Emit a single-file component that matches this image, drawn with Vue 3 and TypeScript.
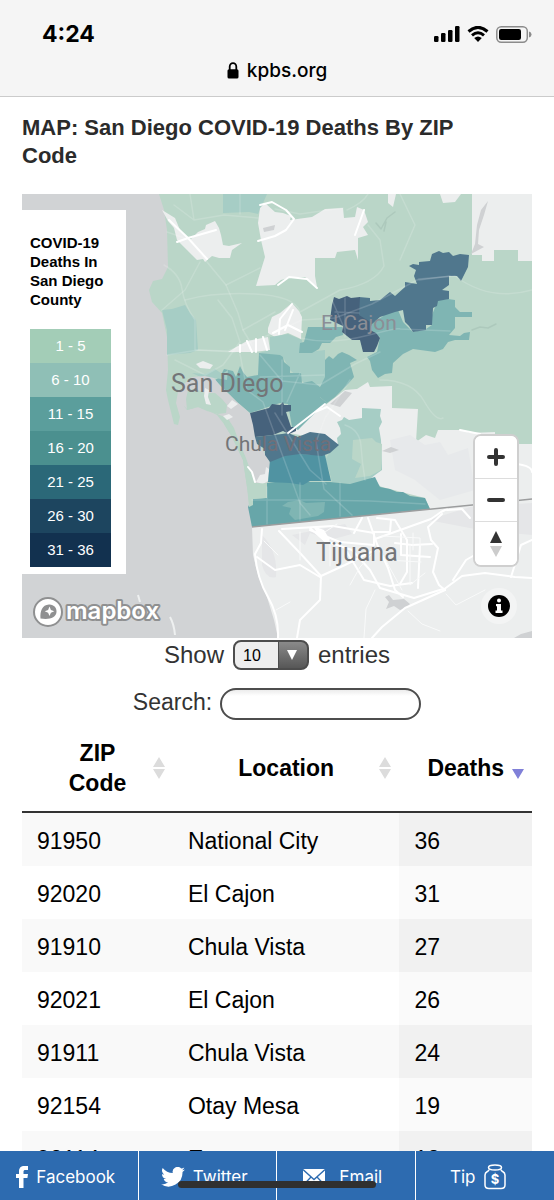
<script setup lang="ts">
import { computed, ref } from 'vue'

interface Row {
  zip: string
  location: string
  deaths: number
}

type Level = 'l1' | 'l2' | 'l3' | 'l4' | 'l5' | 'l6' | 'l7' | 'land' | 'water'

interface Area {
  level: Level
  points: string
}

const bands = ['1 - 5', '6 - 10', '11 - 15', '16 - 20', '21 - 25', '26 - 30', '31 - 36']

const rows: Row[] = [
  { zip: '91950', location: 'National City', deaths: 36 },
  { zip: '92020', location: 'El Cajon', deaths: 31 },
  { zip: '91910', location: 'Chula Vista', deaths: 27 },
  { zip: '92021', location: 'El Cajon', deaths: 26 },
  { zip: '91911', location: 'Chula Vista', deaths: 24 },
  { zip: '92154', location: 'Otay Mesa', deaths: 19 },
  { zip: '92114', location: 'Encanto', deaths: 18 },
]

const pageSize = ref('10')
const query = ref('')

const visibleRows = computed(() => {
  const q = query.value.trim().toLowerCase()
  return rows.filter((r) => `${r.zip} ${r.location} ${r.deaths}`.toLowerCase().includes(q))
})

const areas: Area[] = [
  // county mainland, Point Loma and the Silver Strand
  { level: 'l1', points: '159,194 532,194 532,499 252,527 250,510 247,487 243,460 232,437 224,424 217,415 207,410 198,407 187,410 184,406 182,393 178,392 176,403 180,417 178,425 174,424 171,412 168,400 166,390 168,370 167,337 162,313 152,302 149,290 153,281 162,279 168,267 167,230 164,210' },
  { level: 'l2', points: '223,194 267,194 263,203 258,214 249,212 223,213' },
  { level: 'l2', points: '162,310 172,309 185,305 190,313 196,320 198,350 190,353 167,355 167,330' },
  // areas with no reported deaths
  { level: 'land', points: '162,210 175,218 180,230 190,240 198,232 205,229 206,225 215,221 219,228 221,235 223,245 229,246 242,243 232,250 230,258 219,258 212,256 205,262 203,259 197,260 193,256 187,250 177,240 174,228 168,221' },
  { level: 'land', points: '265,203 260,208 258,223 261,240 265,257 256,286 275,285 281,280 288,278 305,277 317,287 315,276 315,258 335,258 337,252 355,250 358,260 358,238 368,235 363,227 368,222 364,210 357,207 355,217 344,218 343,208 325,209 312,217 290,220 291,216 283,213 275,212' },
  { level: 'land', points: '472,194 532,194 532,261 518,261 518,250 494,250 494,261 482,261 482,255 472,255' },
  { level: 'land', points: '388,194 396,194 393,207 388,203' },
  { level: 'land', points: '440,194 461,194 455,202 443,203' },
  { level: 'land', points: '268,333 268,328 272,317 280,313 292,303 299,311 302,317 301,339 288,333 275,337' },
  { level: 'land', points: '228,352 238,346 247,341 268,337 270,350 253,352' },
  { level: 'land', points: '288,433 300,425 315,413 328,403 345,390 357,389 368,382 370,387 392,386 392,408 418,409 416,442 426,435 435,438 438,430 462,430 470,433 495,432 495,444 532,444 532,499 430,509 425,498 382,487 350,470 330,440' },
  // central city
  { level: 'l2', points: '259,353 270,350 270,337 288,334 302,340 301,353 325,350 325,383 312,390 290,370 283,357' },
  { level: 'l3', points: '259,353 280,355 283,357 284,362 290,367 290,373 301,373 302,383 312,381 320,387 320,397 327,403 315,413 298,430 292,427 288,404 280,403 250,413 237,402 228,393 215,380 220,377 224,369 233,371 236,377 240,366 243,372 247,377 258,375' },
  { level: 'l2', points: '192,373 205,374 215,369 222,374 228,370 227,380 215,378 205,379' },
  // San Diego Bay
  { level: 'water', points: '180,391 185,383 192,377 205,376 214,378 222,388 230,395 237,402 252,415 254,428 255,437 262,449 267,457 270,463 269,473 267,483 255,483 247,462 238,440 227,418 215,413 198,407 187,409 183,405' },
  { level: 'l1', points: '186,399 188,390 196,389 205,393 215,393 222,399 227,405 226,413 218,414 207,411 198,407 187,410' },
  { level: 'l1', points: '227,417 234,428 239,442 246,458 250,470 255,484 247,487 243,460 232,437 224,424' },
  { level: 'land', points: '196,364 203,361 213,365 210,369 200,368' },
  { level: 'land', points: '205,388 209,390 208,397 211,405 206,404 204,396' },
  { level: 'land', points: '227,406 232,400 238,404 231,409' },
  { level: 'land', points: '223,416 229,414 233,417 227,420' },
  { level: 'land', points: '256,482 260,475 265,474 266,467 269,469 268,481 263,484' },
  // La Mesa and Spring Valley
  { level: 'l3', points: '308,327 342,327 343,335 336,337 330,343 322,343 319,349 312,353 299,353 300,343 304,342' },
  { level: 'l3', points: '325,360 329,356 333,359 338,354 342,352 349,355 357,360 350,363 354,377 348,384 342,390 335,397 327,403 320,397 320,387 325,377' },
  // east county
  { level: 'l3', points: '372,322 382,317 389,310 398,310 403,322 413,332 426,329 432,325 432,315 438,300 448,299 455,300 455,307 460,312 472,312 472,317 455,317 455,328 449,335 460,336 464,333 470,332 469,340 455,340 448,342 443,349 435,352 413,349 403,354 393,363 392,373 385,374 378,378 372,370 370,361 367,357 377,352 380,337 372,332' },
  { level: 'l6', points: '359,297 370,298 370,301 380,300 390,292 395,296 405,287 405,282 417,284 414,276 416,270 409,266 413,264 419,265 419,262 430,261 432,254 439,251 443,253 449,252 453,256 460,254 469,255 468,267 461,281 457,276 449,276 449,285 442,290 449,291 449,299 438,301 437,306 433,308 432,325 426,325 426,330 413,332 409,326 405,322 403,310 395,312 380,317 372,324 358,319' },
  { level: 'l7', points: '334,297 339,299 347,296 351,298 360,297 359,315 372,323 370,330 376,333 380,338 377,346 374,352 363,352 360,340 352,340 342,332 343,326 330,320 332,305' },
  // south bay
  { level: 'l2', points: '342,420 344,417 349,420 362,418 362,408 381,409 380,416 382,422 379,428 381,440 382,470 375,475 365,483 350,484 332,482 329,470 325,460 330,452 338,445 337,438 341,434 340,428 337,422' },
  { level: 'l1', points: '353,440 372,438 376,442 382,444 381,470 370,476 355,478 361,464 352,459' },
  { level: 'l4', points: '248,507 252,499 267,498 267,483 275,482 330,482 350,484 375,477 380,487 390,489 397,492 403,492 410,496 425,498 430,509 252,527' },
  { level: 'l3', points: '288,502 300,500 306,503 325,502 324,512 318,516 295,520 289,514 291,508 282,506' },
  { level: 'l1', points: '247,485 267,483 267,498 253,499 253,505 249,507' },
  { level: 'l5', points: '270,460 276,453 325,455 327,464 331,481 310,481 303,485 290,483 268,482' },
  { level: 'l6', points: '265,449 257,444 255,437 282,434 288,433 298,437 310,432 325,434 339,445 330,453 322,456 300,454 285,456 270,462 265,455' },
  { level: 'l7', points: '250,413 269,408 272,404 280,405 283,402 284,405 291,405 291,411 286,412 291,427 296,427 296,431 289,434 283,431 273,435 255,437 253,425' },
]

const streets: string[] = [
  'M167 232 L190 240 L207 262 L226 285 L238 313 L243 330 L252 345',
  'M164 265 Q180 274 182 289 T195 320 V350 L235 352',
  'M185 300 Q215 292 255 294 T300 312 L340 290 Q375 284 384 266 L380 240 L368 225',
  'M174 205 L194 220 L224 215 L258 218 M190 194 L194 220 M240 194 V214',
  'M200 262 L185 290 L162 310 M226 285 L260 268 M243 330 L275 312',
  'M167 355 L198 350 L228 351 L262 338 L302 320 L335 318 L372 304 L419 279 L455 276 Q490 302 532 290',
  'M300 338 Q330 345 365 336 T400 329 L450 331',
  'M175 360 L205 375 L223 365 L240 342 L232 318 L218 300',
  'M240 354 L247 390 L263 402 L275 435 L300 503 L310 515',
  'M260 355 L282 381 L320 385 L355 364 L380 352',
  'M282 360 V415 M260 377 L324 375 M300 373 L287 402',
  'M275 413 L310 470 L326 484 M350 380 L325 418 L316 442 L324 489 L352 515',
  'M252 500 L315 500 L370 501 L425 504 M267 487 V524 M300 483 V520 M340 483 V516',
  'M345 425 Q360 430 361 446 T365 480 M380 380 Q412 380 424 401 T443 418',
  'M347 210 Q363 203 368 194 M400 194 L415 225 L400 260 M343 208 L300 214 L275 209',
  'M332 300 L345 330 M345 298 V337 M335 312 L359 313 M419 280 L450 276',
]

const highways: string[] = [
  'M260 205 L272 202 L286 210 L294 219 L286 230 L275 236 L258 241',
  'M169 220 L188 238 L207 259 M188 238 L177 242 M188 238 L216 230',
  'M278 285 L289 277 L307 279 L317 288',
  'M273 333 L288 325 L302 332 M279 334 L280 319 L292 304 M285 330 L293 310',
  'M240 345 V352 M247 341 L252 352 M256 339 V352 M263 337 L267 350',
  'M248 467 L252 472 L255 482',
  'M288 433 L315 412 L325 404 M315 412 L327 407 L340 416',
  'M355 235 L364 210 M460 430 L480 434 M517 464 Q532 466 532 472',
]

const mexicoRoads: string[] = [
  'M262 529 L261 543 L255 554 Q257 578 268 597 T278 638',
  'M279 531 L300 553 L321 576 L320 600 L300 620 L297 638',
  'M282 529 L333 526 L374 533 L374 545 L340 542 L310 530',
  'M310 528 L325 541 L352 550 L370 570 L380 588 L414 598 L443 589',
  'M368 518 L377 544 L388 568 L395 590 L403 597',
  'M347 552 L364 580 L390 586 L412 583',
  'M377 518 L395 520 L407 540 L407 572 L400 584',
  'M375 539 L431 519 L441 512 L447 509',
  'M395 543 L412 545 L432 544 M401 534 V555 L430 557 M420 545 L418 588',
  'M442 514 L428 527 L431 540 L438 548 L433 572 L439 585 L445 590',
  'M443 590 L462 576 L485 573 L515 577 L532 578 M445 590 L405 608 L382 627 L372 638',
  'M511 577 L521 545 L532 540 M453 580 L466 560 L480 552 M447 510 L462 509 L470 518',
  'M321 576 L345 565 L375 550 M257 557 L275 570 L300 565 L320 577',
  'M391 520 L390 532 L373 532 M354 533 L362 518',
]

const fineRoads: string[] = [
  'M350 585 L360 567 L371 555 M375 590 L366 609 L364 638 M325 532 L337 524 M300 532 V560 M330 545 V566',
  'M382 536 L420 538 L420 553 M387 560 L421 562 M410 545 V585 L425 573 M413 533 L413 550 M380 550 L402 590',
  'M446 594 L456 605 L485 590 M408 611 L422 624 L440 631 M276 610 L290 602 M264 541 L278 555',
]
</script>

<template>
  <div class="page">
    <header class="browser">
      <div class="status">
        <span class="time">4:24</span>
        <span class="indicators">
          <svg class="signal" viewBox="0 0 26 16" aria-hidden="true">
            <rect x="0" y="10" width="4.5" height="6" rx="1.2" />
            <rect x="7" y="7" width="4.5" height="9" rx="1.2" />
            <rect x="14" y="4" width="4.5" height="12" rx="1.2" />
            <rect x="21" y="0" width="4.5" height="16" rx="1.2" />
          </svg>
          <svg class="wifi" viewBox="0 0 22 16" aria-hidden="true">
            <path d="M1.5 5.5 Q11 -2.8 20.5 5.5" />
            <path d="M5 9.3 Q11 4.2 17 9.3" />
            <path class="solid" d="M7.2 12 Q11 9 14.8 12 L11 16 Z" />
          </svg>
          <svg class="battery" viewBox="0 0 36 17" aria-hidden="true">
            <rect class="case" x="0.8" y="0.8" width="30.5" height="15.4" rx="4.4" />
            <rect x="3" y="3" width="22" height="11" rx="2.2" />
            <path class="cap" d="M33 5.5 Q35.5 6.2 35.5 8.5 T33 11.5 Z" />
          </svg>
        </span>
      </div>
      <div class="address">
        <svg class="lock" viewBox="0 0 12 17" aria-hidden="true">
          <path d="M2.7 8 V4.7 a3.3 3.5 0 0 1 6.6 0 V8" />
          <rect x="0.5" y="7.2" width="11" height="9.3" rx="1.6" />
        </svg>
        <span>kpbs.org</span>
      </div>
    </header>

    <main class="content">
      <h1>MAP: San Diego COVID-19 Deaths By ZIP Code</h1>

      <section class="map" aria-label="COVID-19 deaths by ZIP code">
        <svg class="tiles" viewBox="22 194 510 444" preserveAspectRatio="xMidYMid slice" aria-hidden="true">
          <rect class="water" x="22" y="194" width="510" height="444" />
          <polygon class="mexico" points="252,527 532,499 532,638 278,638 274,620 267,597 258,575 253,555" />
          <path class="relief" d="M262 535 Q278 551 276 577 Q266 580 262 565 Z M292 535 L345 524 L352 534 L330 540 L310 533 L305 545 Z M428 520 L470 507 L532 503 V535 L480 530 Z" />
          <polygon v-for="(a, i) in areas" :key="i" :class="a.level" :points="a.points" />
          <g class="haze">
            <path d="M390 440 L410 435 L425 445 L440 442 L448 455 L468 448 L475 490 L440 500 L415 480 L395 470 Z" />
            <path d="M480 465 L500 460 L515 480 L500 497 L482 490 Z" />
          </g>
          <g class="shade">
            <path d="M488 201 L484 215 L479 230 L478 244 L484 247 L471 254 L475 244 L477 225 L481 210 Z" />
            <path d="M263 228 L275 225 L274 230 L264 232 Z" />
            <path d="M330 404 L345 391 L352 393 L340 407 Z" />
            <path d="M382 451 L391 447 L399 450 L390 453 Z" />
            <path d="M385 597 L389 595 L393 600 L404 599 L410 604 L407 608 L400 610 L394 606 L386 609 L389 602 Z" />
            <path d="M514 638 L521 634 L532 631 V638 Z" />
          </g>
          <g class="creeks">
            <path d="M376 223 L381 229 L387 218 L395 212 M384 231 L386 222 M472 330 L480 327 L488 328 L496 324" />
          </g>
          <g class="streets"><path v-for="d in streets" :key="d" :d="d" /></g>
          <g class="highways"><path v-for="d in highways" :key="d" :d="d" /></g>
          <g class="highways"><path v-for="d in mexicoRoads" :key="d" :d="d" /></g>
          <g class="fine"><path v-for="d in fineRoads" :key="d" :d="d" /></g>
          <path class="interchange" d="M313 526 L324 530 L330 540 L326 543 L318 535 Z" />
          <path class="foam" d="M138 595 L140 602 M170 617 Q174 624 175 635" />
          <path class="border" d="M252 527 L532 499" />
          <g class="places">
            <text x="171" y="392" font-size="25">San Diego</text>
            <text class="faint" x="321" y="330" font-size="21">El Cajon</text>
            <text x="225" y="451" font-size="21">Chu<tspan class="dusk">la Vista</tspan></text>
            <text x="316" y="561" font-size="25">Tijuana</text>
          </g>
        </svg>

        <aside class="legend">
          <h2>COVID-19 Deaths In San Diego County</h2>
          <ul>
            <li v-for="(band, i) in bands" :key="band" :class="`band${i + 1}`">{{ band }}</li>
          </ul>
        </aside>

        <a class="logo" href="#" aria-label="mapbox">
          <svg viewBox="0 0 130 34" aria-hidden="true">
            <circle class="ring" cx="16" cy="17" r="14" />
            <path class="pin" d="M8.5 23.5 C8 16 10 9.8 17 9.4 C22 9.2 25 13 24.5 17 C24 23 17 25 8.5 23.5 Z" />
            <path class="star" d="M17.5 11.5 L18.9 14.9 L22.3 16.3 L18.9 17.7 L17.5 21.1 L16.1 17.7 L12.7 16.3 L16.1 14.9 Z" />
            <text x="34" y="24">mapbox</text>
          </svg>
        </a>

        <div class="zoom">
          <button type="button" aria-label="Zoom in">
            <svg viewBox="0 0 20 20"><path class="bar" d="M10 3 V17 M3 10 H17" /></svg>
          </button>
          <button type="button" aria-label="Zoom out">
            <svg viewBox="0 0 20 20"><path class="bar" d="M3 10 H17" /></svg>
          </button>
          <button type="button" aria-label="Reset bearing to north">
            <svg class="needle" viewBox="0 0 12 28">
              <path class="north" d="M6 1 L12 13 H0 Z" />
              <path class="south" d="M6 27 L12 16 H0 Z" />
            </svg>
          </button>
        </div>

        <button class="info" type="button" aria-label="Map attribution">
          <svg viewBox="0 0 22 22" aria-hidden="true">
            <circle cx="11" cy="11" r="11" />
            <circle class="mark" cx="11" cy="5.5" r="2" />
            <path class="mark" d="M8 9 H13 V15.5 H14.5 V18 H7.5 V15.5 H9 V11.2 H8 Z" />
          </svg>
        </button>
      </section>

      <div class="length">
        <label for="page-size">Show</label>
        <span class="picker">
          <select id="page-size" v-model="pageSize">
            <option>10</option>
            <option>25</option>
            <option>50</option>
            <option>100</option>
          </select>
          <svg class="arrow" viewBox="0 0 10 10" aria-hidden="true"><path d="M0 0 H10 L5 10 Z" /></svg>
        </span>
        <span>entries</span>
      </div>

      <div class="search">
        <label for="search">Search:</label>
        <input id="search" v-model="query" type="search" />
      </div>

      <table>
        <colgroup>
          <col class="c1" />
          <col class="c2" />
          <col class="c3" />
        </colgroup>
        <thead>
          <tr>
            <th scope="col">
              <button type="button">
                ZIP Code
                <svg class="sort" viewBox="0 0 12 22" aria-hidden="true"><path d="M6 0 L12 10 H0 Z M6 22 L12 12 H0 Z" /></svg>
              </button>
            </th>
            <th scope="col">
              <button type="button">
                Location
                <svg class="sort" viewBox="0 0 12 22" aria-hidden="true"><path d="M6 0 L12 10 H0 Z M6 22 L12 12 H0 Z" /></svg>
              </button>
            </th>
            <th scope="col" aria-sort="descending">
              <button type="button">
                Deaths
                <svg class="sort active" viewBox="0 0 12 22" aria-hidden="true"><path d="M6 22 L12 12 H0 Z" /></svg>
              </button>
            </th>
          </tr>
        </thead>
        <tbody>
          <tr v-for="row in visibleRows" :key="row.zip">
            <td>{{ row.zip }}</td>
            <td>{{ row.location }}</td>
            <td>{{ row.deaths }}</td>
          </tr>
        </tbody>
      </table>
    </main>

    <nav class="share" aria-label="Share">
      <a href="#">
        <svg class="fb" viewBox="0 0 12 22" aria-hidden="true"><path d="M3 22 V12 H0 V8 H3 V5.5 C3 1.8 5 0 8.3 0 H12 V4 H9.5 C8 4 7.5 4.6 7.5 5.8 V8 H12 L11.4 12 H7.5 V22 Z" /></svg>
        <span>Facebook</span>
      </a>
      <a href="#">
        <svg class="tw" viewBox="0 0 24 20" aria-hidden="true"><path d="M24 2.4 a10 10 0 0 1-2.8.8 A5 5 0 0 0 23.3.4 a10 10 0 0 1-3.1 1.2 A4.9 4.9 0 0 0 11.8 6.1 A14 14 0 0 1 1.7.9 A4.9 4.9 0 0 0 3.2 7.5 A5 5 0 0 1 1 6.9 a5 5 0 0 0 3.9 4.9 a5 5 0 0 1-2.2.1 a4.9 4.9 0 0 0 4.6 3.4 A10 10 0 0 1 0 17.3 A14 14 0 0 0 21.5 4.9 A10 10 0 0 0 24 2.4 Z" /></svg>
        <span>Twitter</span>
      </a>
      <a href="#">
        <svg class="mail" viewBox="0 0 22 17" aria-hidden="true">
          <rect width="22" height="17" />
          <path d="M0 0.5 L11 10.5 L22 0.5 M0 16.5 L8 8 M22 16.5 L14 8" />
        </svg>
        <span>Email</span>
      </a>
      <a href="#">
        <span>Tip</span>
        <svg class="jar" viewBox="0 0 22 26" aria-hidden="true">
          <ellipse cx="11" cy="3.5" rx="6.5" ry="2.5" />
          <path d="M5 5.5 C5 8 1 7 1 11 V21 Q1 24.5 5 24.5 H17 Q21 24.5 21 21 V11 C21 7 17 8 17 5.5" />
          <text x="11" y="19.5">$</text>
        </svg>
      </a>
      <span class="home"></span>
    </nav>
  </div>
</template>

<style>
html,
body {
  margin: 0;
  background: #fff;
}
</style>

<style scoped>
* {
  box-sizing: border-box;
}

.page {
  position: relative;
  display: flex;
  flex-direction: column;
  height: 100vh;
  overflow: hidden;
  font-family: "Liberation Sans", Arial, sans-serif;
  color: #000;
}

.browser {
  flex: none;
  padding: 20px 22px 10px;
  background: #f5f5f5;
  border-bottom: 1px solid #cbcbcb;
  font-family: Inter, sans-serif;
}

.status {
  display: flex;
  justify-content: space-between;
  align-items: center;
  height: 28px;
  padding-left: 20px;
}

.time {
  font-size: 23px;
  font-weight: 700;
}

.indicators {
  display: flex;
  align-items: center;
  gap: 7px;
}

.signal {
  width: 26px;
  height: 16px;
}

.wifi {
  width: 22px;
  height: 16px;
  fill: none;
  stroke: #000;
  stroke-width: 3;
}

.wifi .solid {
  fill: #000;
  stroke: none;
}

.battery {
  width: 36px;
  height: 17px;
}

.battery .case {
  fill: none;
  stroke: #8b8b8b;
  stroke-width: 1.5;
}

.battery .cap {
  fill: #8b8b8b;
}

.address {
  display: flex;
  justify-content: center;
  align-items: center;
  gap: 8px;
  height: 38px;
  padding-top: 6px;
  font-size: 19px;
  font-weight: 500;
}

.lock {
  width: 12px;
  height: 17px;
}

.lock path {
  fill: none;
  stroke: #000;
  stroke-width: 1.8;
}

.content {
  flex: 1;
  min-height: 0;
  padding: 17px 22px 0;
  overflow: hidden;
}

h1 {
  margin: 0 0 24px;
  padding-right: 60px;
  font-size: 22px;
  line-height: 28px;
  color: #2b2b2b;
}

.map {
  position: relative;
  height: 444px;
  overflow: hidden;
}

.tiles {
  display: block;
  width: 100%;
  height: 100%;
}

.water { fill: #d1d3d5; }
.mexico, .land { fill: #eceeee; }
.relief { fill: #e5e6e8; }
.l1 { fill: #bad6c8; }
.l2 { fill: #a6cdc5; }
.l3 { fill: #7fb5b3; }
.l4 { fill: #67a6a9; }
.l5 { fill: #5093a2; }
.l6 { fill: #50778d; }
.l7 { fill: #46627c; }
.haze { fill: #e7e9eb; }
.shade { fill: #cfd1d3; }

.creeks,
.streets,
.highways,
.fine {
  fill: none;
  stroke-linejoin: round;
  stroke-linecap: round;
}

.creeks {
  stroke: #adc9bc;
  stroke-width: 1.5;
}

.streets {
  stroke: #fff;
  stroke-opacity: 0.16;
  stroke-width: 1.5;
}

.highways {
  stroke: #fff;
  stroke-width: 2;
}

.fine {
  stroke: #f9fafa;
  stroke-width: 1;
}

.interchange {
  fill: #fff;
}

.foam {
  fill: none;
  stroke: #eef0f0;
  stroke-width: 2;
}

.border {
  fill: none;
  stroke: #9c9d9e;
  stroke-width: 1.5;
}

.places {
  font-family: Roboto, sans-serif;
  fill: #737578;
}

.places .faint { fill: #8b8e96; }
.places .dusk { fill: #726f78; }

.legend {
  position: absolute;
  top: 16px;
  left: 0;
  width: 104px;
  padding: 23px 15px 7px 8px;
  background: #fff;
}

.legend h2 {
  margin: 0 0 20px;
  font-size: 15px;
  line-height: 19px;
}

.legend ul {
  margin: 0;
  padding: 0;
  list-style: none;
}

.legend li {
  height: 34px;
  font-size: 15px;
  line-height: 34px;
  text-align: center;
  color: #fff;
}

.band1 { background: #a3cdb7; }
.band2 { background: #8fbfb6; }
.band3 { background: #5b9e9c; }
.band4 { background: #4b908f; }
.band5 { background: #2b6878; }
.band6 { background: #1d455f; }
.band7 { background: #12314f; }

.logo {
  position: absolute;
  bottom: 9px;
  left: 10px;
  width: 130px;
  height: 34px;
}

.logo svg {
  display: block;
  width: 130px;
  height: 34px;
}

.ring {
  fill: #fff;
  stroke: #8f9091;
  stroke-width: 2;
}

.pin { fill: #8f9091; }
.star { fill: #fff; }

.logo text {
  font-family: Inter, sans-serif;
  font-size: 24px;
  font-weight: 600;
  fill: #fff;
  stroke: #8f9091;
  stroke-width: 4;
  stroke-linejoin: round;
  paint-order: stroke;
}

.zoom {
  position: absolute;
  top: 240px;
  right: 13px;
  width: 46px;
  border: 2px solid #cfcfcf;
  border-radius: 8px;
  background: #fff;
  overflow: hidden;
}

.zoom button {
  display: grid;
  place-items: center;
  width: 100%;
  height: 43px;
  padding: 0;
  border: 0;
  border-bottom: 1px solid #ddd;
  background: #fff;
}

.zoom button:last-child {
  border-bottom: 0;
}

.zoom svg {
  width: 20px;
  height: 20px;
}

.zoom .needle {
  width: 12px;
  height: 28px;
}

.bar {
  fill: none;
  stroke: #333;
  stroke-width: 4;
  stroke-linecap: round;
}

.north { fill: #333; }
.south { fill: #ccc; }

.info {
  position: absolute;
  right: 15px;
  bottom: 14px;
  display: grid;
  place-items: center;
  width: 36px;
  height: 36px;
  padding: 0;
  border: 0;
  border-radius: 18px;
  background: #f3f4f4;
}

.info svg {
  width: 22px;
  height: 22px;
}

.mark { fill: #fff; }

.length,
.search {
  display: flex;
  justify-content: center;
  align-items: center;
  font-size: 24px;
  color: #333;
}

.length {
  gap: 9px;
  height: 34px;
}

.picker {
  position: relative;
  display: block;
}

select {
  display: block;
  width: 76px;
  height: 30px;
  padding: 0 0 0 8px;
  appearance: none;
  border: 2px solid #4d4d4d;
  border-radius: 8px;
  background: linear-gradient(90deg, transparent 43px, #4d4d4d 43px, #4d4d4d 44px, transparent 44px), linear-gradient(90deg, #eee 44px, transparent 44px), linear-gradient(#8a8a8a, #575757);
  font-family: "Liberation Sans", Arial, sans-serif;
  font-size: 16px;
  color: #000;
}

.arrow {
  position: absolute;
  top: 10px;
  right: 12px;
  width: 10px;
  height: 10px;
  fill: #fff;
  pointer-events: none;
}

.search {
  gap: 8px;
  height: 32px;
  margin-top: 16px;
  font-size: 23px;
}

.search label {
  padding-bottom: 4px;
}

input {
  width: 201px;
  height: 32px;
  padding: 0 14px;
  appearance: none;
  border: 2px solid #4d4d4d;
  border-radius: 16px;
  background: linear-gradient(#ececec, #fff 6px);
  font: inherit;
  font-size: 18px;
}

table {
  width: 100%;
  margin-top: 18px;
  border-collapse: separate;
  border-spacing: 0;
  table-layout: fixed;
  font-size: 23px;
}

.c1 { width: 29.6%; }
.c2 { width: 44.4%; }
.c3 { width: 26%; }

th {
  height: 75px;
  padding: 0 8px 13px;
  border-bottom: 2px solid #333;
}

th button {
  position: relative;
  display: block;
  width: 100%;
  padding: 0 20px;
  border: 0;
  background: none;
  font: inherit;
  font-weight: 700;
  line-height: 30px;
  color: #000;
}

.sort {
  position: absolute;
  top: 50%;
  right: 0;
  width: 12px;
  height: 22px;
  margin-top: -11px;
  fill: #dcdcdc;
}

.sort.active {
  fill: #8080d8;
}

td {
  height: 53px;
  padding: 2px 15px 0;
  line-height: 28px;
}

td:last-child {
  background: #fafafa;
}

tbody tr:nth-child(odd) {
  background: #f9f9f9;
}

tbody tr:nth-child(odd) td:last-child {
  background: #f1f1f1;
}

.share {
  position: relative;
  flex: none;
  display: grid;
  grid-template-columns: repeat(4, 1fr);
  height: 49px;
  background: #2d6bb0;
  font-family: Inter, sans-serif;
  font-size: 17px;
}

.share a {
  display: flex;
  align-items: center;
  justify-content: center;
  gap: 8px;
  padding: 3px 6px 0 0;
  border-right: 1px solid #fff;
  color: #fff;
  text-decoration: none;
}

.share a:nth-child(4) {
  padding-right: 14px;
  border-right: 0;
}

.share svg {
  fill: #fff;
}

.fb {
  width: 12px;
  height: 22px;
}

.tw {
  width: 24px;
  height: 20px;
}

.mail {
  width: 22px;
  height: 17px;
  margin-right: 6px;
}

.mail path {
  fill: none;
  stroke: #2d6bb0;
  stroke-width: 1.3;
}

.share .jar {
  width: 22px;
  height: 26px;
  fill: none;
  stroke: #fff;
  stroke-width: 1.5;
}

.share .jar text {
  font-size: 13px;
  font-weight: 700;
  text-anchor: middle;
  fill: #fff;
  stroke: none;
}

.home {
  position: absolute;
  bottom: 12px;
  left: 50%;
  width: 198px;
  height: 7px;
  border-radius: 4px;
  background: #303030;
  transform: translateX(-50%);
}
</style>
